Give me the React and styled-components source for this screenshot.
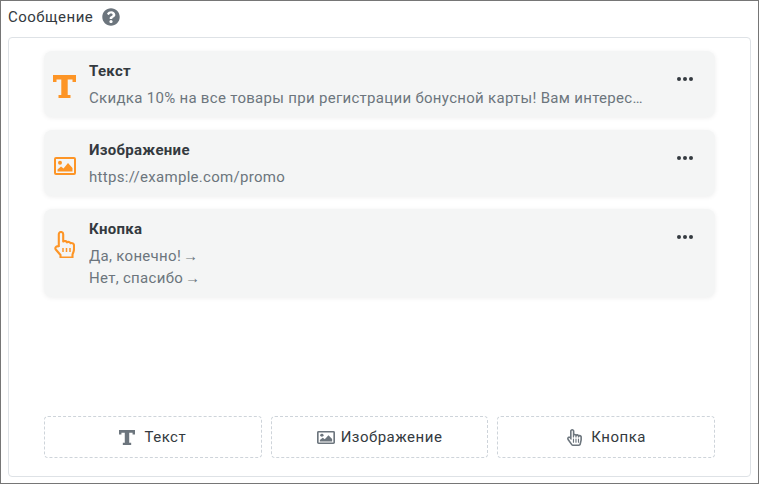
import React from "react";
import styled, { createGlobalStyle } from "styled-components";
import { FaRegHandPointer, FaQuestionCircle } from "react-icons/fa";

const GlobalStyle = createGlobalStyle`
  html, body {
    margin: 0;
    padding: 0;
    background: #fff;
  }
  * {
    box-sizing: border-box;
  }
`;

const Page = styled.div`
  width: 759px;
  height: 484px;
  border: 1px solid #767676;
  padding: 0 7px 6px 7px;
  display: flex;
  flex-direction: column;
  font-family: Roboto, "Liberation Sans", sans-serif;
  background: #fff;
`;

const Header = styled.div`
  height: 36px;
  padding-bottom: 4px;
  display: flex;
  align-items: center;
  gap: 9px;
  font-size: 15px;
  letter-spacing: 0.5px;
  color: #343a40;
`;

const HelpIcon = styled(FaQuestionCircle)`
  width: 18px;
  height: 18px;
  color: #6c757d;
`;

const Panel = styled.div`
  flex: 1;
  border: 1px solid #dee2e6;
  border-radius: 4px;
  padding: 13px 35px 18px;
  display: flex;
  flex-direction: column;
  justify-content: space-between;
`;

const List = styled.div`
  display: flex;
  flex-direction: column;
  gap: 13px;
`;

const Card = styled.div`
  position: relative;
  display: grid;
  grid-template-columns: 41px 1fr;
  column-gap: 4px;
  align-items: start;
  padding: 11px 70px 8px 0;
  background: #f4f5f5;
  border-radius: 8px;
  box-shadow: 0 1px 5px rgba(0, 0, 0, 0.07);
`;

const CardIcon = styled.div`
  height: 27px;
  margin-top: 11px;
  display: flex;
  align-items: center;
  justify-content: center;
  color: #fd9526;
`;

const CardBody = styled.div`
  min-width: 0;
  display: flex;
  flex-direction: column;
`;

const CardTitle = styled.div`
  font-size: 15px;
  line-height: 18px;
  font-weight: 700;
  letter-spacing: 0.3px;
  color: #343a40;
  margin-bottom: 7px;
`;

const CardLine = styled.div`
  font-size: 15px;
  line-height: 22px;
  letter-spacing: 0.3px;
  color: #6c757d;
  white-space: nowrap;
  overflow: hidden;
  text-overflow: ellipsis;
`;

const MoreDots = styled.div`
  position: absolute;
  top: 26px;
  right: 22px;
  display: flex;
  gap: 2px;
`;

const Dot = styled.span`
  width: 4px;
  height: 4px;
  border-radius: 50%;
  background: #343a40;
`;

const AddRow = styled.div`
  display: grid;
  grid-template-columns: repeat(3, 1fr);
  gap: 9px;
`;

const AddButton = styled.div`
  height: 42px;
  border: 1px dashed #ced4da;
  border-radius: 4px;
  display: flex;
  align-items: center;
  justify-content: center;
  gap: ${({ $gap }) => $gap}px;
  font-size: 15px;
  letter-spacing: 0.5px;
  color: #343a40;
`;

const AddIcon = styled.span`
  display: flex;
  color: #6c757d;
  font-size: 17px;
`;

const TextGlyph = ({ width, height }) => (
  <svg width={width} height={height} viewBox="0 0 23 23.5" fill="currentColor" preserveAspectRatio="none">
    <path d="M0 0h23v7h-3.500V4.500H14.700V20h2.800v3.500h-12V20h2.800V4.500H3.500V7H0z" />
  </svg>
);

const ImageGlyph = ({ width, height }) => (
  <svg width={width} height={height} viewBox="1 3 22 18" fill="currentColor" preserveAspectRatio="none">
    <path
      fillRule="evenodd"
      d="M3 3h18a2 2 0 0 1 2 2v14a2 2 0 0 1-2 2H3a2 2 0 0 1-2-2V5a2 2 0 0 1 2-2zM3 5v14h18V5z"
    />
    <circle cx="7" cy="8.800" r="2" />
    <path d="M4.500 17.500v-2l3.500-3 2.500 2 4.500-5.500 4.500 5v3.500z" />
  </svg>
);

const HandGlyph = ({ width, height }) => (
  <svg width={width} height={height} viewBox="0 0 21.500 27" fill="none" stroke="currentColor" strokeWidth="2.100" strokeLinejoin="round">
    <path d="M4.800 16V3.200a2.200 2.200 0 0 1 4.400 0V10.500c1.500-.8 3.200-.5 3.800.8 1.300-.7 3-.4 3.600.9 1.500-.5 3.400.4 3.400 2.300v3.500c0 2-.5 3.500-1.500 5.500v3H6.500v-2.500L1.800 18.500c-1.200-1.500.8-4.600 3-2.500" />
    <path d="M9 17v4M12.500 17v4M16 17v4" strokeWidth="1.500" />
  </svg>
);

const cards = [
  {
    id: "text",
    title: "Текст",
    icon: <TextGlyph width={23} height={23.5} />,
    lines: ["Скидка 10% на все товары при регистрации бонусной карты! Вам интересно узнать больше о предложении?"],
  },
  {
    id: "image",
    title: "Изображение",
    icon: <ImageGlyph width={22} height={18} />,
    lines: ["https://example.com/promo"],
  },
  {
    id: "button",
    title: "Кнопка",
    icon: <HandGlyph width={21.5} height={27} />,
    lines: ["Да, конечно!\u202F→", "Нет, спасибо\u202F→"],
  },
];

const actions = [
  { id: "text", label: "Текст", gap: 9, icon: <TextGlyph width={16} height={15} /> },
  { id: "image", label: "Изображение", gap: 6, icon: <ImageGlyph width={18} height={13} /> },
  { id: "button", label: "Кнопка", gap: 8, icon: <FaRegHandPointer /> },
];

const App = () => (
  <>
    <GlobalStyle />
    <Page>
      <Header>
        Сообщение
        <HelpIcon />
      </Header>
      <Panel>
        <List>
          {cards.map((card) => (
            <Card key={card.id}>
              <CardIcon>{card.icon}</CardIcon>
              <CardBody>
                <CardTitle>{card.title}</CardTitle>
                {card.lines.map((line) => (
                  <CardLine key={line}>{line}</CardLine>
                ))}
              </CardBody>
              <MoreDots>
                <Dot />
                <Dot />
                <Dot />
              </MoreDots>
            </Card>
          ))}
        </List>
        <AddRow>
          {actions.map((action) => (
            <AddButton key={action.id} $gap={action.gap}>
              <AddIcon>{action.icon}</AddIcon>
              {action.label}
            </AddButton>
          ))}
        </AddRow>
      </Panel>
    </Page>
  </>
);

export default App;
